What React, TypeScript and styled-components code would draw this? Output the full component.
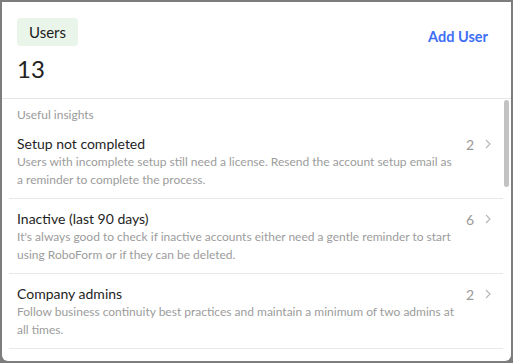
import React from "react";
import styled, { createGlobalStyle } from "styled-components";

const Global = createGlobalStyle`
  html, body { margin: 0; padding: 0; }
  body {
    background: #7d7d7d;
    font-family: Lato, "Open Sans", sans-serif;
    -webkit-font-smoothing: antialiased;
  }
  #root { width: 513px; height: 363px; }
`;

const Frame = styled.div`
  box-sizing: border-box;
  width: 513px;
  height: 363px;
  padding: 2px;
  display: flex;
`;

const Card = styled.div`
  flex: 1;
  background: #ffffff;
  border-radius: 0 0 6px 6px;
  display: flex;
  flex-direction: column;
  overflow: hidden;
  position: relative;
`;

const Header = styled.header`
  display: flex;
  justify-content: space-between;
  align-items: flex-start;
  padding: 16px 23px 0 15px;
  height: 97px;
  box-sizing: border-box;
  border-bottom: 1px solid #e6e6e6;
`;

const TitleBlock = styled.div`
  display: flex;
  flex-direction: column;
  align-items: flex-start;
  gap: 9px;
`;

const Badge = styled.span`
  display: inline-flex;
  align-items: center;
  height: 28px;
  padding: 0 12px;
  border-radius: 4px;
  background: #eaf5e9;
  color: #1c1c1c;
  font-size: 15px;
  line-height: 28px;
`;

const Count = styled.div`
  font-size: 24px;
  line-height: 28px;
  color: #222222;
  font-weight: 400;
`;

const AddButton = styled.button`
  margin-top: 10px;
  border: 0;
  background: none;
  padding: 0;
  font-family: inherit;
  font-size: 14.5px;
  font-weight: 700;
  color: #3f6ff6;
  cursor: pointer;
`;

const List = styled.div`
  flex: 1;
  padding: 0 8px 0 7px;
  overflow: hidden;
`;

const SectionLabel = styled.div`
  padding: 7px 8px 0;
  font-size: 12px;
  line-height: 18px;
  color: #9a9a9a;
`;

const Row = styled.div`
  display: flex;
  align-items: flex-start;
  gap: 6px;
  padding: 11px 12px 9px 8px;
  border-bottom: 1px solid #e8e8e8;
`;

const RowText = styled.div`
  flex: 1;
  min-width: 0;
`;

const RowTitle = styled.div`
  font-size: 14px;
  line-height: 18px;
  color: #1e1e1e;
`;

const RowDesc = styled.div`
  font-size: 12px;
  line-height: 18px;
  color: #9c9c9c;
`;

const RowMeta = styled.div`
  display: flex;
  align-items: center;
  gap: 11px;
  height: 18px;
  font-size: 14px;
  color: #9a9a9a;
`;

const Thumb = styled.div`
  position: absolute;
  right: 2px;
  top: 98px;
  width: 5px;
  height: 87px;
  border-radius: 3px;
  background: #c2c2c2;
`;

const Chevron = () => (
  <svg width="6" height="10" viewBox="0 0 6 10" fill="none">
    <path d="M1 1l4 4-4 4" stroke="#b5b5b5" strokeWidth="1.1" />
  </svg>
);

const items = [
  {
    title: "Setup not completed",
    desc: "Users with incomplete setup still need a license. Resend the account setup email as a reminder to complete the process.",
    count: 2,
  },
  {
    title: "Inactive (last 90 days)",
    desc: "It's always good to check if inactive accounts either need a gentle reminder to start using RoboForm or if they can be deleted.",
    count: 6,
  },
  {
    title: "Company admins",
    desc: "Follow business continuity best practices and maintain a minimum of two admins at all times.",
    count: 2,
  },
];

export default function App() {
  return (
    <>
      <Global />
      <Frame>
        <Card>
          <Header>
            <TitleBlock>
              <Badge>Users</Badge>
              <Count>13</Count>
            </TitleBlock>
            <AddButton>Add User</AddButton>
          </Header>
          <List>
            <SectionLabel>Useful insights</SectionLabel>
            {items.map((it) => (
              <Row key={it.title}>
                <RowText>
                  <RowTitle>{it.title}</RowTitle>
                  <RowDesc>{it.desc}</RowDesc>
                </RowText>
                <RowMeta>
                  <span>{it.count}</span>
                  <Chevron />
                </RowMeta>
              </Row>
            ))}
          </List>
          <Thumb />
        </Card>
      </Frame>
    </>
  );
}
